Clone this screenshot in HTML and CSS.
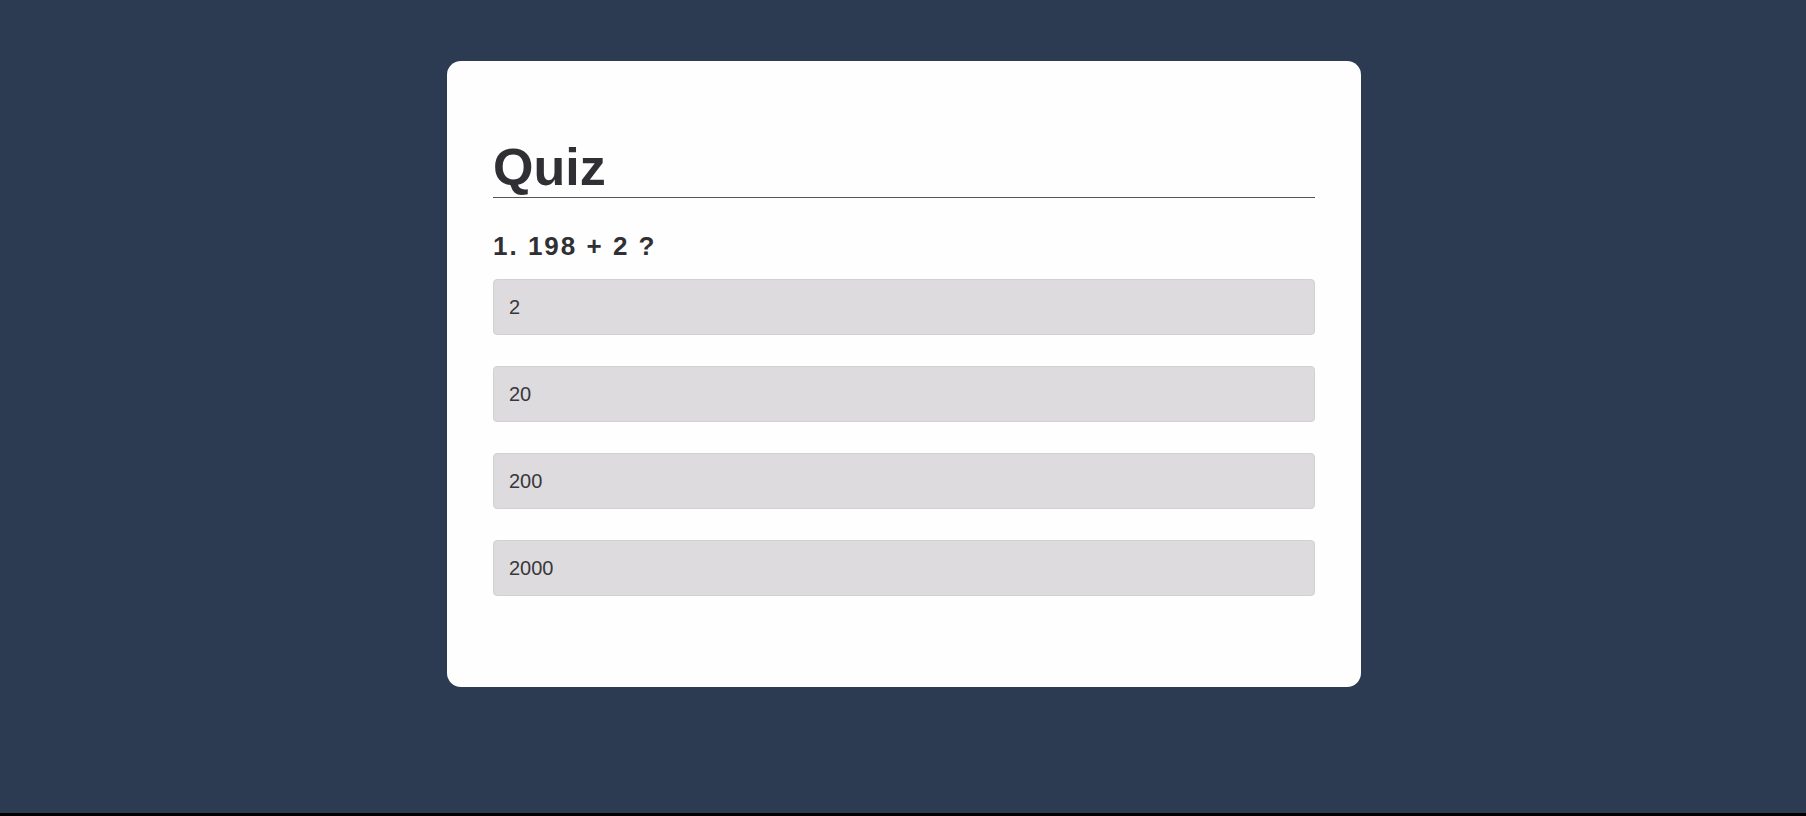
FILE: index.html
```html
<!DOCTYPE html>
<html lang="en">
<head>
<meta charset="utf-8">
<title>Quiz</title>
<link rel="stylesheet" href="styles.css">
</head>
<body>
<div class="page">
  <main class="card">
    <h1 class="title">Quiz</h1>
    <h2 class="question">1. 198 + 2 ?</h2>
    <div class="options">
      <button class="option" type="button">2</button>
      <button class="option" type="button">20</button>
      <button class="option" type="button">200</button>
      <button class="option" type="button">2000</button>
    </div>
  </main>
</div>
</body>
</html>
```
FILE: styles.css
```css
html {
  background: #000;
}
body {
  margin: 0;
  font-family: "Liberation Sans", Arial, sans-serif;
}
.page {
  height: 813px;
  background: #2c3b52;
  display: flex;
  justify-content: center;
  align-items: flex-start;
  padding-top: 61px;
  padding-left: 2px;
  box-sizing: border-box;
}
.card {
  width: 914px;
  height: 626px;
  box-sizing: border-box;
  background: #fefefe;
  border-radius: 14px;
  padding: 77px 46px 0 46px;
}
.title {
  margin: 0;
  font-size: 52px;
  line-height: 59px;
  font-weight: 700;
  color: #303034;
  border-bottom: 1px solid #555;
}
.question {
  margin: 33px 0 0 0;
  font-size: 26px;
  line-height: 30px;
  font-weight: 700;
  letter-spacing: 2px;
  color: #303034;
}
.options {
  margin-top: 18px;
  display: flex;
  flex-direction: column;
  gap: 31px;
}
.option {
  display: block;
  width: 100%;
  height: 56px;
  box-sizing: border-box;
  margin: 0;
  padding: 0 15px;
  text-align: left;
  font-family: "Liberation Sans", Arial, sans-serif;
  font-size: 20px;
  line-height: 23px;
  color: #38383b;
  background: #dddbde;
  border: 1px solid #d2d0d3;
  border-radius: 4px;
}
```
